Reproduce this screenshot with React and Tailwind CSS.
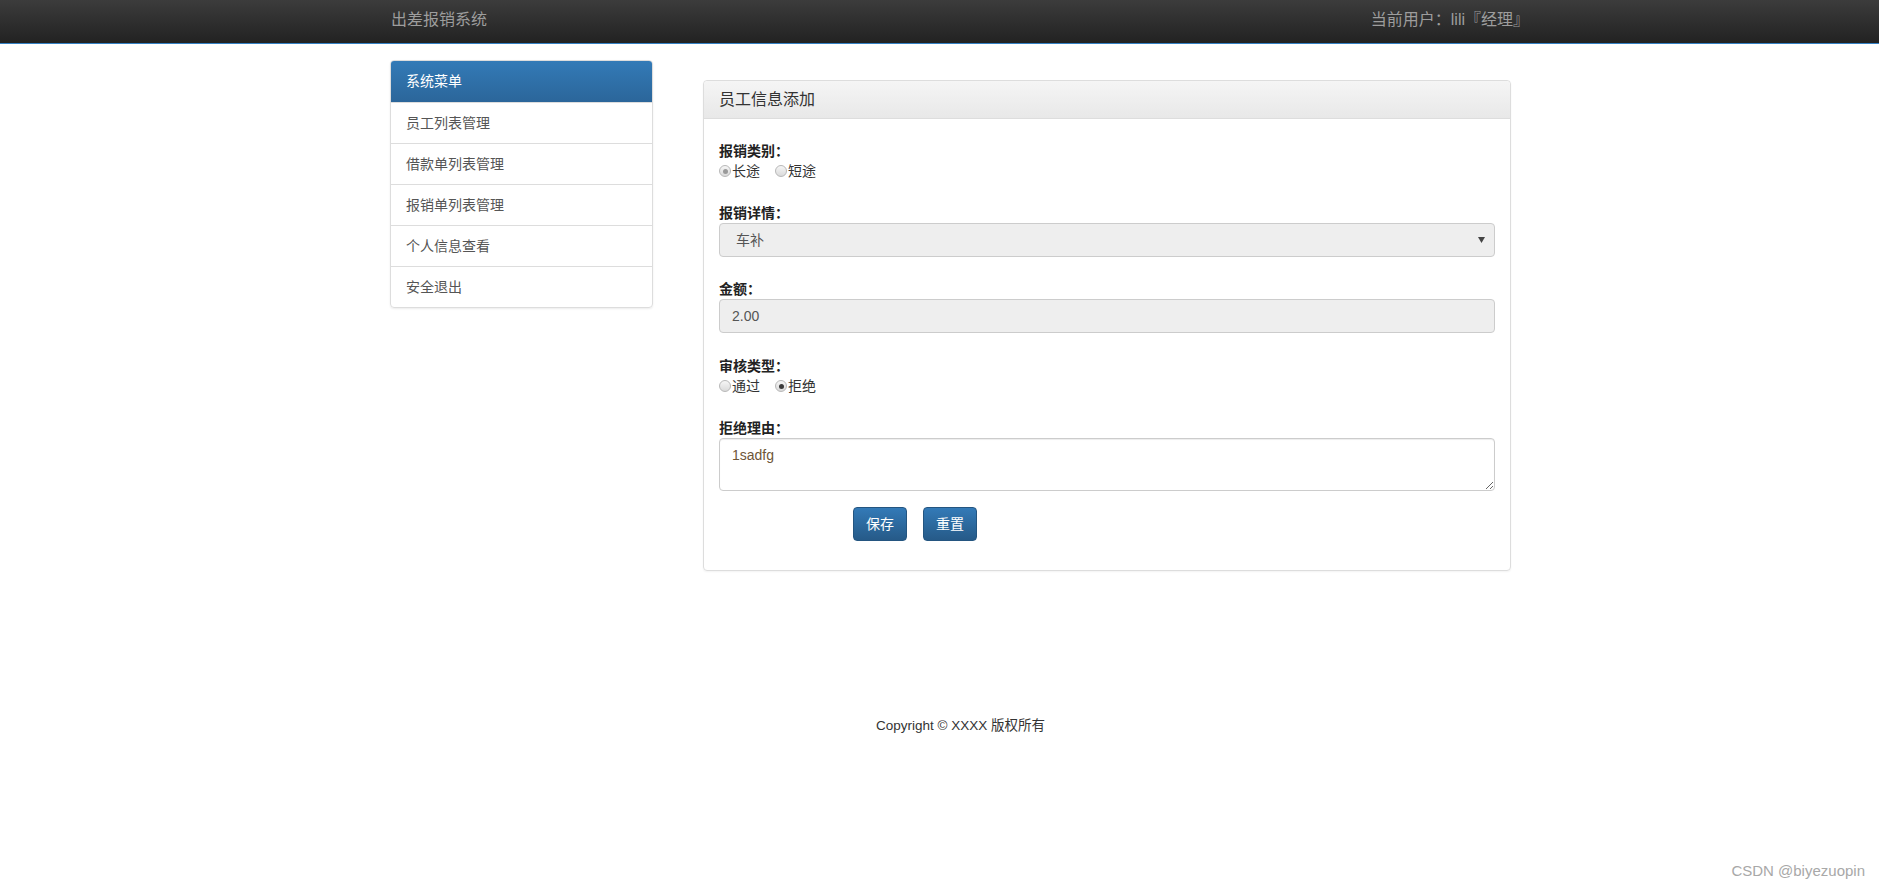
import React from "react";

const menu = ["员工列表管理", "借款单列表管理", "报销单列表管理", "个人信息查看", "安全退出"];

function Radio({ checked, dark, label }) {
  return (
    <span className="mr-[15px] inline-flex items-center">
      <span className="inline-flex h-[12px] w-[12px] items-center justify-center rounded-full border border-[#b8b8b8] bg-linear-to-b from-[#f6f6f6] to-[#dadada]">
        {checked && <span className={dark ? "h-[5px] w-[5px] rounded-full bg-[#3a3a3a]" : "h-[5px] w-[5px] rounded-full bg-[#9a9a9a]"} />}
      </span>
      <span className="ml-[1px]">{label}</span>
    </span>
  );
}

function Label({ children, className = "" }) {
  return <div className={"h-[20px] text-[14px] leading-[20px] font-bold text-[#222] " + className}>{children}</div>;
}

export default function App() {
  return (
    <div className="relative min-h-[888px] bg-white font-['Liberation_Sans','Noto_Sans_CJK_SC',sans-serif] text-[14px] text-[#333]">
      <div className="h-[44px] border-b border-[#3581c4] bg-linear-to-b from-[#3c3c3c] to-[#222]">
        <div className="ml-[391px] flex h-full w-[1138px] items-center justify-between pb-[4px] text-[16px] text-[#9d9d9d]">
          <span>出差报销系统</span>
          <span>当前用户：lili『经理』</span>
        </div>
      </div>

      <div className="ml-[390px] flex w-[1131px] items-start pt-[16px]">
        <div className="w-[263px] overflow-hidden rounded-[4px] border border-[#ddd] shadow-[0_1px_2px_rgba(0,0,0,0.075)]">
          <div className="flex h-[41px] items-center bg-linear-to-b from-[#337ab7] to-[#2b669a] px-[15px] text-white">系统菜单</div>
          {menu.map((m) => (
            <div key={m} className="flex h-[41px] items-center border-t border-[#ddd] px-[15px] text-[#555]">
              {m}
            </div>
          ))}
        </div>

        <div className="ml-[50px] mt-[20px] w-[808px] rounded-[4px] border border-[#ddd] shadow-[0_1px_2px_rgba(0,0,0,0.05)]">
          <div className="flex h-[38px] items-center rounded-t-[4px] border-b border-[#ddd] bg-linear-to-b from-[#f5f5f5] to-[#e8e8e8] px-[15px] text-[16px] text-[#333]">
            员工信息添加
          </div>
          <div className="px-[15px] pt-[22px] pb-[29px]">
            <Label>报销类别：</Label>
            <div className="flex h-[20px] items-center leading-[20px]">
              <Radio checked label="长途" />
              <Radio label="短途" />
            </div>

            <Label className="mt-[22px]">报销详情：</Label>
            <div className="relative flex h-[34px] w-[776px] items-center rounded-[4px] border border-[#ccc] bg-[#eee] pl-[16px] text-[#555]">
              车补
              <svg className="absolute right-[9px] top-[13px]" width="7" height="6" viewBox="0 0 7 6">
                <path d="M0 0 L7 0 L3.5 6 Z" fill="#444" />
              </svg>
            </div>

            <Label className="mt-[22px]">金额：</Label>
            <div className="flex h-[34px] w-[776px] items-center rounded-[4px] border border-[#ccc] bg-[#eee] pl-[12px] text-[#555]">2.00</div>

            <Label className="mt-[23px]">审核类型：</Label>
            <div className="flex h-[20px] items-center leading-[20px]">
              <Radio label="通过" />
              <Radio checked dark label="拒绝" />
            </div>

            <Label className="mt-[22px]">拒绝理由：</Label>
            <textarea
              readOnly
              defaultValue="1sadfg"
              className="block h-[53px] w-[776px] rounded-[4px] border border-[#ccc] bg-white px-[12px] py-[6px] text-[14px] leading-[20px] text-[#6e5537] shadow-[inset_0_1px_1px_rgba(0,0,0,0.075)] outline-none"
            />

            <div className="mt-[16px] flex gap-[16px] pl-[134px]">
              <button className="h-[34px] w-[54px] rounded-[4px] border border-[#245580] bg-linear-to-b from-[#337ab7] to-[#265a88] text-[14px] text-white">保存</button>
              <button className="h-[34px] w-[54px] rounded-[4px] border border-[#245580] bg-linear-to-b from-[#337ab7] to-[#265a88] text-[14px] text-white">重置</button>
            </div>
          </div>
        </div>
      </div>

      <div className="ml-[390px] mt-[145px] w-[1141px] text-center text-[13.5px] leading-[20px] text-[#333]">Copyright © XXXX 版权所有</div>

      <div className="absolute bottom-[7px] right-[14px] text-[15px] leading-[20px] text-[#a8a8a8]">CSDN @biyezuopin</div>
    </div>
  );
}
